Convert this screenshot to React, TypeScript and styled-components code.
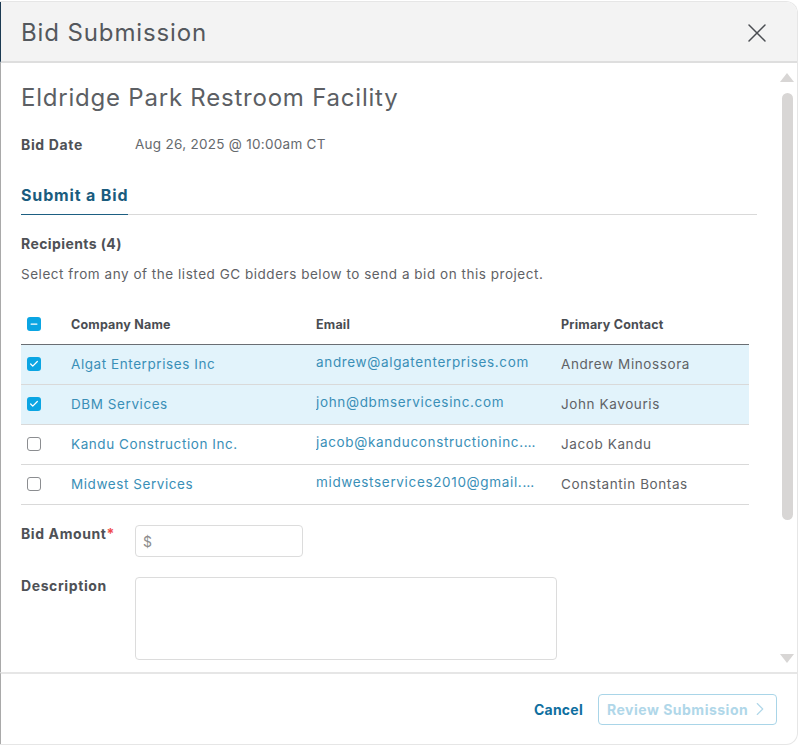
import React from "react";
import styled, { createGlobalStyle } from "styled-components";
import { X, ChevronRight, Check, Minus } from "lucide-react";

const GlobalStyle = createGlobalStyle`
  html, body {
    margin: 0;
    padding: 0;
    background: #fff;
    font-family: "Inter", "Open Sans", sans-serif;
  }
  * { box-sizing: border-box; }
`;

const Page = styled.div`
  width: 800px;
  height: 746px;
  padding: 1px 2px 1px 0;
  overflow: hidden;
  background: #fff;
`;

const Dialog = styled.div`
  height: 100%;
  display: flex;
  flex-direction: column;
  border: 1px solid #e6e6e6;
  border-left: none;
  border-radius: 0 12px 12px 0;
  overflow: hidden;
  background: #fff;
`;

const Header = styled.div`
  height: 61px;
  flex: none;
  display: flex;
  align-items: center;
  justify-content: space-between;
  padding: 2px 24px 0 20px;
  background: #f3f3f3;
  border-left: 1px solid #1c3a52;
  border-bottom: 2px solid #dedede;
`;

const DialogTitle = styled.div`
  font-size: 24px;
  letter-spacing: 0.88px;
  color: #54585d;
`;

const CloseButton = styled.div`
  display: flex;
  color: #4a4d52;
`;

const Body = styled.div`
  flex: 1;
  min-height: 0;
  display: flex;
  border-left: 1px solid #a9a9a9;
`;

const Content = styled.div`
  flex: 1;
  min-width: 0;
  padding: 0 0 0 20px;
`;

const ProjectTitle = styled.div`
  margin-top: 20px;
  height: 30px;
  line-height: 30px;
  font-size: 24px;
  letter-spacing: 0.78px;
  color: #5c5f64;
`;

const InfoRow = styled.div`
  margin-top: 21px;
  display: flex;
  align-items: center;
  height: 20px;
  font-size: 13.5px;
  letter-spacing: 0.28px;
  color: #66696d;
`;

const InfoLabel = styled.div`
  width: 114px;
  font-weight: 700;
  font-size: 14px;
  letter-spacing: 0.65px;
  color: #4e5156;
`;

const Tabs = styled.div`
  margin-top: 21px;
  height: 40px;
  border-bottom: 1px solid #d9d9d9;
  display: flex;
`;

const Tab = styled.div`
  height: 40px;
  padding-top: 10px;
  border-bottom: 1px solid #1d5f82;
  font-size: 16px;
  font-weight: 700;
  letter-spacing: 0.85px;
  color: #1a5c7e;
`;

const SectionTitle = styled.div`
  margin-top: 19px;
  height: 20px;
  line-height: 20px;
  font-size: 14px;
  font-weight: 700;
  letter-spacing: 0.4px;
  color: #4e5156;
`;

const HelpText = styled.div`
  margin-top: 10px;
  height: 20px;
  line-height: 20px;
  font-size: 13.5px;
  letter-spacing: 0.53px;
  color: #5f6266;
`;

const Table = styled.div`
  margin-top: 20px;
  margin-right: 8px;
`;

const Grid = styled.div<{ $selected?: boolean; $head?: boolean }>`
  display: grid;
  grid-template-columns: 50px 245px 245px 1fr;
  align-items: center;
  height: ${(p) => (p.$head ? "41px" : "40px")};
  padding-bottom: ${(p) => (p.$head ? "0" : "2px")};
  background: ${(p) => (p.$selected ? "#e2f3fb" : "#fff")};
  border-bottom: ${(p) => (p.$head ? "1px solid #6a6e73" : "1px solid #d9d9d9")};
`;

const HeadCell = styled.div`
  font-size: 12.5px;
  font-weight: 700;
  letter-spacing: 0.2px;
  color: #4a4d52;
`;

const CheckCell = styled.div`
  padding-left: 6px;
  display: flex;
`;

const Box = styled.div<{ $on?: boolean }>`
  width: 14px;
  height: 14px;
  border-radius: 3px;
  display: flex;
  align-items: center;
  justify-content: center;
  color: #fff;
  background: ${(p) => (p.$on ? "#0ba5e3" : "#fff")};
  border: ${(p) => (p.$on ? "none" : "1.5px solid #8b8d90")};
`;

const NameLink = styled.div`
  font-size: 13.5px;
  letter-spacing: 0.57px;
  color: #3a8fb7;
`;

const EmailLink = styled.div`
  font-size: 13.5px;
  letter-spacing: 0.66px;
  color: #3a8fb7;
  padding-right: 22px;
  margin-top: -4px;
  white-space: nowrap;
  overflow: hidden;
  text-overflow: ellipsis;
`;

const ContactCell = styled.div`
  font-size: 13.5px;
  letter-spacing: 0.6px;
  color: #5f6266;
`;

const FormRow = styled.div<{ $gap: number }>`
  margin-top: ${(p) => p.$gap}px;
  display: flex;
  align-items: flex-start;
`;

const FieldLabel = styled.div`
  width: 114px;
  font-size: 14px;
  line-height: 18px;
  font-weight: 700;
  letter-spacing: 0.6px;
  color: #4e5156;
`;

const Required = styled.span`
  color: #ef4b4b;
`;

const AmountInput = styled.div`
  width: 168px;
  height: 32px;
  border: 1px solid #dcdcdc;
  border-radius: 4px;
  padding-left: 7px;
  display: flex;
  align-items: center;
  font-size: 14px;
  color: #8c8c8c;
`;

const TextBox = styled.div`
  width: 422px;
  height: 83px;
  border: 1px solid #dcdcdc;
  border-radius: 4px;
`;

const ScrollBar = styled.div`
  width: 40px;
  flex: none;
  display: flex;
  flex-direction: column;
  align-items: center;
  padding: 10px 0 9px 20px;
`;

const Arrow = styled.div<{ $down?: boolean }>`
  width: 0;
  height: 0;
  flex: none;
  border-left: 7px solid transparent;
  border-right: 7px solid transparent;
  ${(p) =>
    p.$down
      ? "border-top: 9px solid #d8d6d5; margin-top: auto;"
      : "border-bottom: 9px solid #d8d6d5;"}
`;

const Thumb = styled.div`
  width: 11px;
  height: 427px;
  margin-top: 11px;
  border-radius: 6px;
  background: #d8d6d5;
`;

const Footer = styled.div`
  height: 72px;
  flex: none;
  border-left: 1px solid #a9a9a9;
  border-top: 2px solid #e6e6e6;
  display: flex;
  align-items: center;
  justify-content: flex-end;
  gap: 15px;
  padding: 0 20px 0 0;
`;

const CancelButton = styled.div`
  font-size: 14px;
  font-weight: 700;
  letter-spacing: 0.25px;
  color: #0f6f9f;
`;

const ReviewButton = styled.div`
  width: 179px;
  height: 31px;
  border: 1.5px solid #a9d5e8;
  border-radius: 4px;
  display: flex;
  align-items: center;
  justify-content: space-between;
  padding: 0 5px 0 8px;
  font-size: 14px;
  font-weight: 700;
  letter-spacing: 0.5px;
  color: #b0d7e9;
`;

const recipients = [
  { name: "Algat Enterprises Inc", email: "andrew@algatenterprises.com", contact: "Andrew Minossora", selected: true },
  { name: "DBM Services", email: "john@dbmservicesinc.com", contact: "John Kavouris", selected: true },
  { name: "Kandu Construction Inc.", email: "jacob@kanduconstructioninc.com", contact: "Jacob Kandu", selected: false },
  { name: "Midwest Services", email: "midwestservices2010@gmail.com", contact: "Constantin Bontas", selected: false },
];

const App = () => {
  return (
    <Page>
      <GlobalStyle />
      <Dialog>
        <Header>
          <DialogTitle>Bid Submission</DialogTitle>
          <CloseButton>
            <X size={32} strokeWidth={1.1} />
          </CloseButton>
        </Header>

        <Body>
          <Content>
            <ProjectTitle>Eldridge Park Restroom Facility</ProjectTitle>
            <InfoRow>
              <InfoLabel>Bid Date</InfoLabel>
              Aug 26, 2025 @ 10:00am CT
            </InfoRow>
            <Tabs>
              <Tab>Submit a Bid</Tab>
            </Tabs>
            <SectionTitle>Recipients (4)</SectionTitle>
            <HelpText>Select from any of the listed GC bidders below to send a bid on this project.</HelpText>

            <Table>
              <Grid $head>
                <CheckCell>
                  <Box $on>
                    <Minus size={10} strokeWidth={3} />
                  </Box>
                </CheckCell>
                <HeadCell>Company Name</HeadCell>
                <HeadCell>Email</HeadCell>
                <HeadCell>Primary Contact</HeadCell>
              </Grid>
              {recipients.map((r) => (
                <Grid key={r.name} $selected={r.selected}>
                  <CheckCell>
                    <Box $on={r.selected}>{r.selected && <Check size={10} strokeWidth={3} />}</Box>
                  </CheckCell>
                  <NameLink>{r.name}</NameLink>
                  <EmailLink>{r.email}</EmailLink>
                  <ContactCell>{r.contact}</ContactCell>
                </Grid>
              ))}
            </Table>

            <FormRow $gap={20}>
              <FieldLabel>
                Bid Amount<Required>*</Required>
              </FieldLabel>
              <AmountInput>$</AmountInput>
            </FormRow>
            <FormRow $gap={20}>
              <FieldLabel>Description</FieldLabel>
              <TextBox />
            </FormRow>
          </Content>
          <ScrollBar>
            <Arrow />
            <Thumb />
            <Arrow $down />
          </ScrollBar>
        </Body>

        <Footer>
          <CancelButton>Cancel</CancelButton>
          <ReviewButton>
            Review Submission
            <ChevronRight size={22} strokeWidth={1.25} />
          </ReviewButton>
        </Footer>
      </Dialog>
    </Page>
  );
};

export default App;
